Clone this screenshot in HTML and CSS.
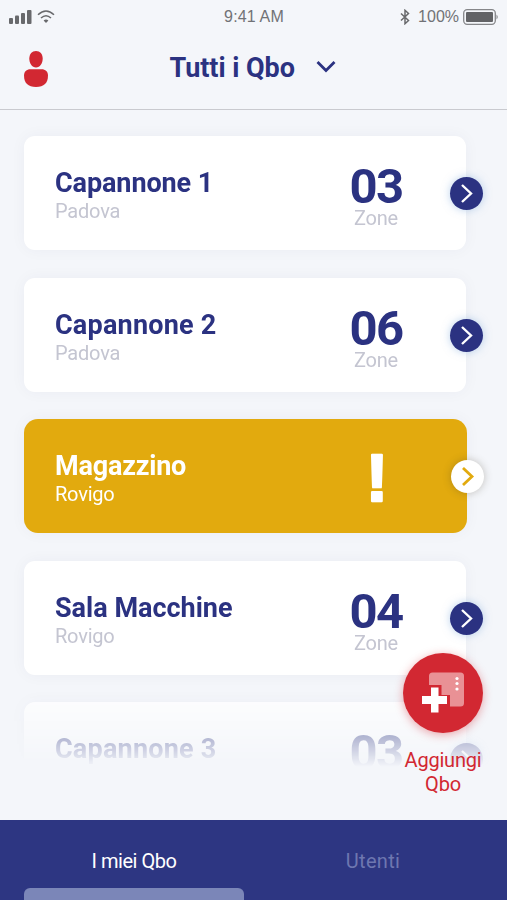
FILE: index.html
```html
<!DOCTYPE html>
<html lang="it">
<head>
<meta charset="utf-8">
<title>Tutti i Qbo</title>
<link rel="stylesheet" href="styles.css">
</head>
<body>
<div class="app">
  <div class="status">
    <div class="status-left">
      <svg width="24" height="14" viewBox="0 0 24 14" fill="#68696c"><rect x="0" y="8" width="4" height="6" rx="1"/><rect x="6" y="5.500" width="4" height="8.500" rx="1"/><rect x="12" y="3" width="4" height="11" rx="1"/><rect x="18" y="0" width="4.500" height="14" rx="1"/></svg>
      <svg width="18" height="14" viewBox="0 0 18 14" fill="none" stroke="#68696c" stroke-width="1.500"><path d="M1 4.800Q9-2.800 17 4.800M4 8Q9 3.400 14 8"/><path d="M6.600 10.500Q9 8.400 11.400 10.500L9 13Z" fill="#68696c" stroke="none"/></svg>
    </div>
    <div class="time">9:41 AM</div>
    <div class="status-right">
      <svg width="10" height="16" viewBox="0 0 10 16" fill="none" stroke="#68696c" stroke-width="1.500"><path d="M1 4.500L8.500 11.500L5 14.700V1.300L8.500 4.500L1 11.500"/></svg>
      <span class="percent">100%</span>
      <svg width="36" height="16" viewBox="0 0 36 16"><rect x=".7" y=".7" width="31.600" height="14.600" rx="3.500" fill="none" stroke="#858689" stroke-width="1.300"/><rect x="3" y="3" width="27" height="10" rx="1" fill="#626366"/><path d="M33.500 5.500Q36 8 33.500 10.500Z" fill="#858689"/></svg>
    </div>
  </div>
  <header class="header">
    <svg class="user" width="24" height="36" viewBox="0 0 24 36" fill="#d22832"><path d="M12 0C16 0 18.700 3 18.700 7.600C18.700 12.500 16 16.500 12 16.500S5.300 12.500 5.300 7.600C5.300 3 8 0 12 0Z"/><path d="M6.500 18.200H17.500C21.500 18.200 24 20.500 24 24.500C24 32 20 36 12 36S0 32 0 24.500C0 20.500 2.500 18.200 6.500 18.200Z"/></svg>
    <h1 class="heading">Tutti i Qbo</h1>
    <svg class="down" width="20" height="14" viewBox="0 0 20 14" fill="none" stroke="#2b3281" stroke-width="2.800"><path d="M1.500 2L10 10.500L18.500 2"/></svg>
  </header>
  <main class="list">
    <section class="card"><div class="info"><h2 class="name n1">Capannone 1</h2><p class="place">Padova</p></div><div class="count"><b class="number">03</b><span class="zone">Zone</span></div><span class="go"><svg width="33" height="33" viewBox="0 0 33 33"><path d="M12 8L21 16.500L12 25"/></svg></span></section>
    <section class="card"><div class="info"><h2 class="name n2">Capannone 2</h2><p class="place">Padova</p></div><div class="count"><b class="number">06</b><span class="zone">Zone</span></div><span class="go"><svg width="33" height="33" viewBox="0 0 33 33"><path d="M12 8L21 16.500L12 25"/></svg></span></section>
    <section class="card alert"><div class="info"><h2 class="name n3">Magazzino</h2><p class="place">Rovigo</p></div><div class="count"><svg class="mark" width="24" height="56" viewBox="0 0 24 56"><text x="12" y="49.500" text-anchor="middle">!</text></svg></div><span class="go"><svg width="33" height="33" viewBox="0 0 33 33"><path d="M12 8L21 16.500L12 25"/></svg></span></section>
    <section class="card"><div class="info"><h2 class="name n4">Sala Macchine</h2><p class="place">Rovigo</p></div><div class="count"><b class="number">04</b><span class="zone">Zone</span></div><span class="go"><svg width="33" height="33" viewBox="0 0 33 33"><path d="M12 8L21 16.500L12 25"/></svg></span></section>
    <section class="card"><div class="info"><h2 class="name n2">Capannone 3</h2></div><div class="count"><b class="number">03</b></div><span class="go"><svg width="33" height="33" viewBox="0 0 33 33"><path d="M12 8L21 16.500L12 25"/></svg></span></section>
  </main>
  <div class="add">
    <div class="add-button">
      <svg width="80" height="80" viewBox="0 0 80 80"><rect x="26" y="19.500" width="35" height="34" rx="3.500" fill="#e99195"/><path d="M24 32H38.500V42H47V55H24Z" fill="#d22832"/><path d="M28 34.500H35.500V43H44V51H35.500V59.500H28V51H19V43H28Z" fill="#fff"/><g fill="#fff"><circle cx="54" cy="25.500" r="1.600"/><circle cx="54" cy="30.500" r="1.600"/><circle cx="54" cy="36" r="1.600"/></g></svg>
    </div>
    <div class="add-label"><span>Aggiungi</span><br>Qbo</div>
  </div>
  <nav class="tabs"><div class="tab active">I miei Qbo</div><div class="tab">Utenti</div></nav>
</div>
</body>
</html>
```

FILE: styles.css
```css
* { box-sizing: border-box; }
body { margin: 0; font-family: Roboto, "Liberation Sans", sans-serif; background: #f4f6fa; }
.app { position: relative; width: 507px; height: 900px; overflow: hidden; display: flex; flex-direction: column; }
h1, h2, p { margin: 0; }
svg { display: block; flex: none; }
.status { height: 34px; display: grid; grid-template-columns: 1fr auto 1fr; align-items: center; padding: 0 8px 0 9px; color: #717276; font-family: "Liberation Sans", sans-serif; font-size: 16px; }
.status-left, .status-right { display: flex; align-items: center; gap: 4px; }
.status-right { justify-content: flex-end; }
.time { letter-spacing: .15px; }
.percent { margin-left: 4px; }
.header { height: 76px; display: flex; align-items: center; padding: 0 0 8px 23.5px; border-bottom: 1.5px solid #c9cacf; }
.user { margin-top: 2px; }
.heading { margin-left: 122px; width: 126px; font-size: 27px; line-height: 32px; font-weight: 700; letter-spacing: -.05px; color: #2b3281; white-space: nowrap; }
.down { margin-left: 20px; margin-top: -2px; }
.list { height: 660px; padding: 26px 0 0 24px; display: flex; flex-direction: column; gap: 27.6px; overflow: hidden; -webkit-mask-image: linear-gradient(#000 565px, transparent 657px); mask-image: linear-gradient(#000 565px, transparent 657px); }
.card { position: relative; flex: none; width: 442px; height: 114px; border-radius: 11px; background: #fff; box-shadow: 0 0 16px rgba(50, 55, 90, .045); display: flex; justify-content: space-between; padding: 31px 50px 0 31px; color: #2b3281; }
.name { font-size: 27px; line-height: 32px; font-weight: 700; white-space: nowrap; }
.n1 { letter-spacing: -.1px; }
.n2 { letter-spacing: .2px; }
.n3 { letter-spacing: -.2px; }
.place, .zone { font-size: 20px; line-height: 24px; color: #c4c5d1; letter-spacing: -.2px; }
.count { width: 80px; display: flex; flex-direction: column; align-items: center; }
.number { font-size: 49px; line-height: 40px; font-weight: 700; letter-spacing: -1.5px; }
.zone { margin-top: -1px; }
.go { position: absolute; right: -17px; top: 41px; width: 33px; height: 33px; border-radius: 50%; background: #2b3281; box-shadow: 0 0 8px rgba(120, 165, 220, .5); }
.go path { fill: none; stroke: #fff; stroke-width: 2.4; }
.alert { width: 443px; background: #e2aa0e; border-radius: 14px; color: #fff; }
.alert .place { color: #fff; }
.alert .go { background: #fff; box-shadow: 0 0 8px rgba(70, 60, 40, .3); }
.alert .go path { stroke: #e2aa0e; stroke-width: 2.8; }
.mark { margin-top: 1px; overflow: visible; }
.mark text { font: 700 66px "Liberation Sans", sans-serif; fill: #fff; stroke: #fff; stroke-width: 2.5px; stroke-linejoin: round; }
.add { position: absolute; left: 403px; top: 653px; width: 80px; }
.add-button { width: 80px; height: 80px; border-radius: 50%; background: #d22832; box-shadow: 0 2px 10px rgba(210, 40, 50, .4); }
.add-label { margin-top: 15px; text-align: center; font-size: 20px; line-height: 24px; letter-spacing: -.2px; color: #d22832; white-space: nowrap; }
.tabs { margin-top: 50px; height: 80px; background: #2d3682; display: grid; grid-template-columns: 220px 220px; column-gap: 19px; padding: 0 24px; color: #fff; }
.tab { padding-top: 29px; text-align: center; font-size: 20px; line-height: 24px; color: #6e77b0; letter-spacing: .3px; }
.tab.active { color: #fff; letter-spacing: -.45px; }
.tab.active::after { content: ""; display: block; height: 20px; margin-top: 15px; border-radius: 6px; background: #7b86b8; }
```
